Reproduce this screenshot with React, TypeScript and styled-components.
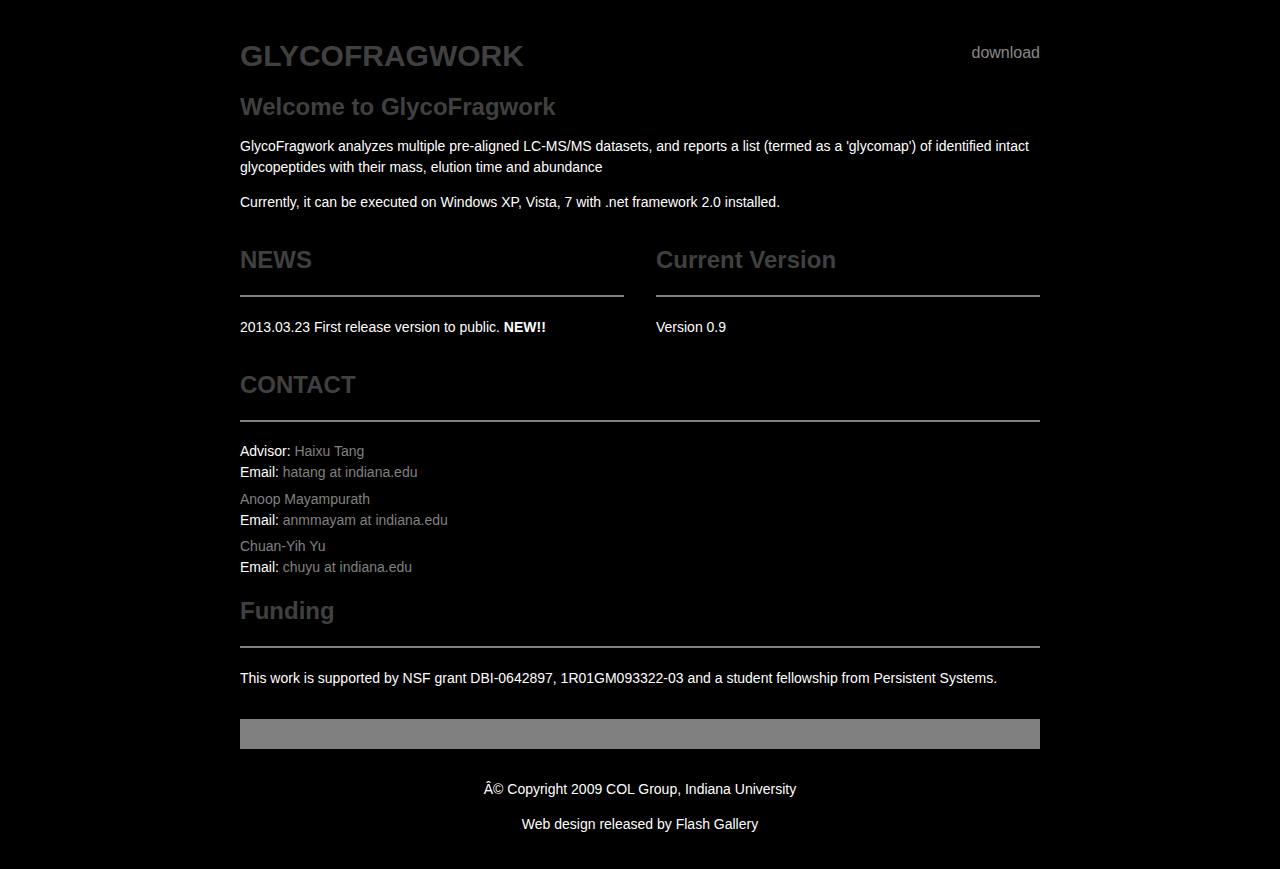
import React from "react";
import styled, { createGlobalStyle } from "styled-components";

const Global = createGlobalStyle`
  html, body { margin: 0; padding: 0; background: #000; }
  body { font-family: "Liberation Sans", Arial, sans-serif; color: #fff; }
`;

const Page = styled.div`
  width: 800px;
  margin: 0 auto;
  padding: 36px 0 34px;
`;

const Header = styled.header`
  display: flex;
  justify-content: space-between;
  align-items: flex-start;
`;

const Logo = styled.h1`
  margin: 0;
  font-size: 30px;
  line-height: 40px;
  font-weight: bold;
  color: #404040;
`;

const NavLink = styled.a`
  font-size: 16px;
  line-height: 33px;
  color: #888;
  text-decoration: none;
`;

const Title = styled.h2<{ $top?: number }>`
  margin: ${(p) => p.$top ?? 0}px 0 0;
  font-size: 24px;
  line-height: 30px;
  font-weight: bold;
  color: #404040;
`;

const Text = styled.p<{ $top?: number }>`
  margin: ${(p) => p.$top ?? 14}px 0 0;
  font-size: 14px;
  line-height: 21px;
  color: #fff;
`;

const Rule = styled.hr`
  margin: 20px 0 0;
  border: 0;
  height: 2px;
  background: #808080;
`;

const Columns = styled.div`
  display: grid;
  grid-template-columns: 1fr 1fr;
  column-gap: 32px;
  margin-top: 32px;
`;

const Column = styled.section``;

const Contact = styled.div<{ $top: number }>`
  margin-top: ${(p) => p.$top}px;
  font-size: 14px;
  line-height: 21px;
`;

const Muted = styled.span`
  color: #808080;
`;

const Bar = styled.div`
  margin-top: 30px;
  height: 30px;
  background: #808080;
`;

const Footer = styled.footer`
  margin-top: 30px;
  text-align: center;
`;

const FootText = styled.p<{ $top: number }>`
  margin: ${(p) => p.$top}px 0 0;
  font-size: 14px;
  line-height: 21px;
`;

export default function App() {
  return (
    <>
      <Global />
      <Page>
        <Header>
          <Logo>GLYCOFRAGWORK</Logo>
          <NavLink href="#">download</NavLink>
        </Header>
        <Title $top={16}>Welcome to GlycoFragwork</Title>
        <Text $top={14}>
          GlycoFragwork analyzes multiple pre-aligned LC-MS/MS datasets, and reports a list (termed as a
          'glycomap') of identified intact glycopeptides with their mass, elution time and abundance
        </Text>
        <Text $top={14}>Currently, it can be executed on Windows XP, Vista, 7 with .net framework 2.0 installed.</Text>

        <Columns>
          <Column>
            <Title>NEWS</Title>
            <Rule />
            <Text $top={20}>
              2013.03.23 First release version to public. <b>NEW!!</b>
            </Text>
          </Column>
          <Column>
            <Title>Current Version</Title>
            <Rule />
            <Text $top={20}>Version 0.9</Text>
          </Column>
        </Columns>

        <Title $top={32}>CONTACT</Title>
        <Rule />
        <Contact $top={19}>
          Advisor: <Muted>Haixu Tang</Muted>
          <br />
          Email: <Muted>hatang at indiana.edu</Muted>
        </Contact>
        <Contact $top={6}>
          <Muted>Anoop Mayampurath</Muted>
          <br />
          Email: <Muted>anmmayam at indiana.edu</Muted>
        </Contact>
        <Contact $top={5}>
          <Muted>Chuan-Yih Yu</Muted>
          <br />
          Email: <Muted>chuyu at indiana.edu</Muted>
        </Contact>

        <Title $top={18}>Funding</Title>
        <Rule />
        <Text $top={20}>
          This work is supported by NSF grant DBI-0642897, 1R01GM093322-03 and a student fellowship from Persistent
          Systems.
        </Text>

        <Bar />
        <Footer>
          <FootText $top={0}>Â© Copyright 2009 COL Group, Indiana University</FootText>
          <FootText $top={14}>Web design released by Flash Gallery</FootText>
        </Footer>
      </Page>
    </>
  );
}
